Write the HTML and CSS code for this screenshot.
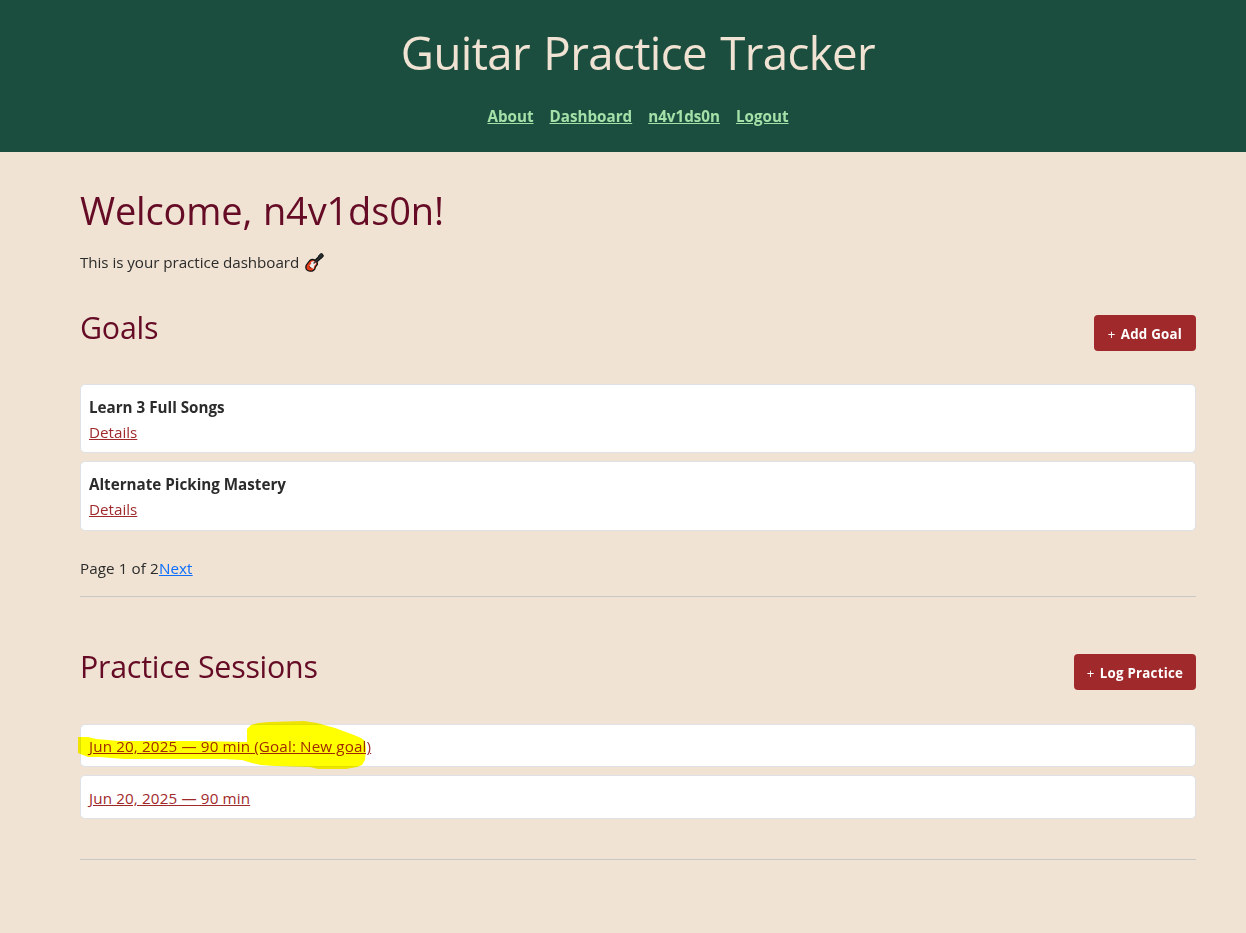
FILE: index.html
```html
<!DOCTYPE html>
<html lang="en">
<head>
<meta charset="utf-8">
<title>Guitar Practice Tracker</title>
<link rel="stylesheet" href="styles.css">
</head>
<body>
<header class="site-header">
  <h1 class="site-title">Guitar Practice Tracker</h1>
  <nav class="site-nav">
    <a href="#">About</a>
    <a href="#">Dashboard</a>
    <a href="#">n4v1ds0n</a>
    <a href="#">Logout</a>
  </nav>
</header>
<main class="content">
  <h2 class="welcome">Welcome, n4v1ds0n!</h2>
  <p class="intro"><span>This is your practice dashboard</span>
    <svg class="guitar" viewBox="0 0 20 20" width="19" height="19">
      <path d="M8 12 17 3.400" stroke="#111" stroke-width="4"/>
      <path d="M14 3.200 16.500.8q1.500-.6 2.500 1l.3 1.800L16.500 6z" fill="#252b2e" stroke="#111"/>
      <path d="M4.800 8.200C6.500 6.700 9.200 6.700 10.800 8c1.400 1.100 2.700 2 2.200 3.800-.4 1.600-1.900 1.900-2.200 3.500-.5 2.700-3 3.900-5.600 3.800-2.700-.1-4.500-1.900-4.300-4.600.2-2.600 2.400-4.100 3.900-6.300z" fill="#e83b19" stroke="#151515" stroke-width="1.400"/>
      <path d="M6.300 9.500 9.300 8.500l2.500 2.900-2 2.100-.8 3.300-3.600-2.400-.7-1.700 1.900-1z" fill="#f3eeee"/>
      <path d="m9 11 7-6.800" stroke="#30383b" stroke-width="1.300"/>
      <path d="m4.300 14 2 2" stroke="#333"/>
    </svg>
  </p>
  <section class="goals">
    <div class="section-head">
      <h3>Goals</h3>
      <a class="button add-goal" href="#"><span class="plus">+</span> <span>Add Goal</span></a>
    </div>
    <ul class="cards">
      <li class="card goal"><strong>Learn 3 Full Songs</strong><a href="#">Details</a></li>
      <li class="card goal"><strong>Alternate Picking Mastery</strong><a href="#">Details</a></li>
    </ul>
    <div class="pagination"><span>Page 1 of 2</span><a href="#">Next</a></div>
  </section>
  <section class="sessions">
    <div class="section-head">
      <h3>Practice Sessions</h3>
      <a class="button log-practice" href="#"><span class="plus">+</span> <span>Log Practice</span></a>
    </div>
    <ul class="cards">
      <li class="card session">
        <a href="#">Jun 20, 2025 — 90 min (Goal: New goal)</a>
        <svg class="marker" viewBox="0 0 290 49" width="290" height="49" aria-hidden="true">
          <path fill="#ff0" d="M0 16h10l8 2 23 2h78l50 1V8l4-4 7-2 11-1 35-1 13 2 18 5 19 7 7 3 4 3 1 8-1 11-3 5-5 2-11 2h-28l-8-2-35-1-14-1-9-2-10-3-18-1H46l-24-2H10L0 32z"/>
        </svg>
      </li>
      <li class="card session"><a href="#">Jun 20, 2025 — 90 min</a></li>
    </ul>
  </section>
</main>
</body>
</html>
```
FILE: styles.css
```css
* { box-sizing: border-box; }
body {
  margin: 0;
  min-height: 933px;
  background: #f0e3d3;
  color: #2b2b2b;
  font: 15.2px/24px "Open Sans", "Noto Sans", sans-serif;
}
h1, h2, h3, p, ul { margin: 0; padding: 0; font-weight: 400; }
.site-header {
  display: flex;
  flex-direction: column;
  align-items: center;
  height: 152px;
  padding: 23px 0 0 30px;
  background: #1c4e3f;
}
.site-title {
  color: #f0e3d3;
  font-size: 45.6px;
  line-height: 58px;
  letter-spacing: -0.6px;
  word-spacing: 2px;
}
.site-nav { display: flex; gap: 16px; margin-top: 23px; font-weight: 700; }
.site-nav a { color: #a4e1a8; }
.content { padding: 34px 50px 0 80px; }
.welcome, h3 { color: #650b25; }
.welcome { font-size: 38px; line-height: 48px; letter-spacing: -0.15px; word-spacing: 1px; }
.intro { display: flex; align-items: center; gap: 6px; margin-top: 16px; height: 24px; letter-spacing: -0.05px; }
.guitar { fill: none; }
.section-head { display: flex; justify-content: space-between; align-items: flex-start; height: 36px; }
.section-head h3 { font-size: 30.4px; line-height: 38px; letter-spacing: -0.25px; margin-top: -6px; }
.goals { margin-top: 41px; padding-bottom: 16px; border-bottom: 1px solid #cac8c5; }
.button {
  display: flex;
  justify-content: center;
  align-items: center;
  gap: 5px;
  height: 36px;
  padding-top: 2px;
  border-radius: 4px;
  background: #9f292b;
  color: #fff;
  font-size: 13.3px;
  font-weight: 700;
  letter-spacing: 0.25px;
  text-decoration: none;
}
.add-goal { width: 102px; }
.log-practice { width: 122px; }
.plus { font-weight: 400; }
.cards { display: flex; flex-direction: column; gap: 8px; margin-top: 33px; list-style: none; }
.card {
  display: flex;
  flex-direction: column;
  align-items: flex-start;
  padding: 0 8px;
  border: 1px solid #dee2e6;
  border-radius: 5px;
  background: #fff;
}
.card a { color: #9f292b; }
.goal { height: 69px; padding-top: 10px; line-height: 25px; }
.goal + .goal { height: 70px; }
.pagination { display: flex; margin-top: 25px; letter-spacing: 0.1px; }
.pagination a { color: #0d6efd; }
.sessions { margin-top: 57px; padding-bottom: 40px; border-bottom: 1px solid #cac8c5; }
.sessions .cards { margin-top: 34px; }
.session { position: relative; height: 43px; padding-top: 9px; letter-spacing: 0.14px; }
.session + .session { height: 44px; padding-top: 10px; }
.marker { position: absolute; left: -3px; top: -4px; mix-blend-mode: multiply; pointer-events: none; }
```
